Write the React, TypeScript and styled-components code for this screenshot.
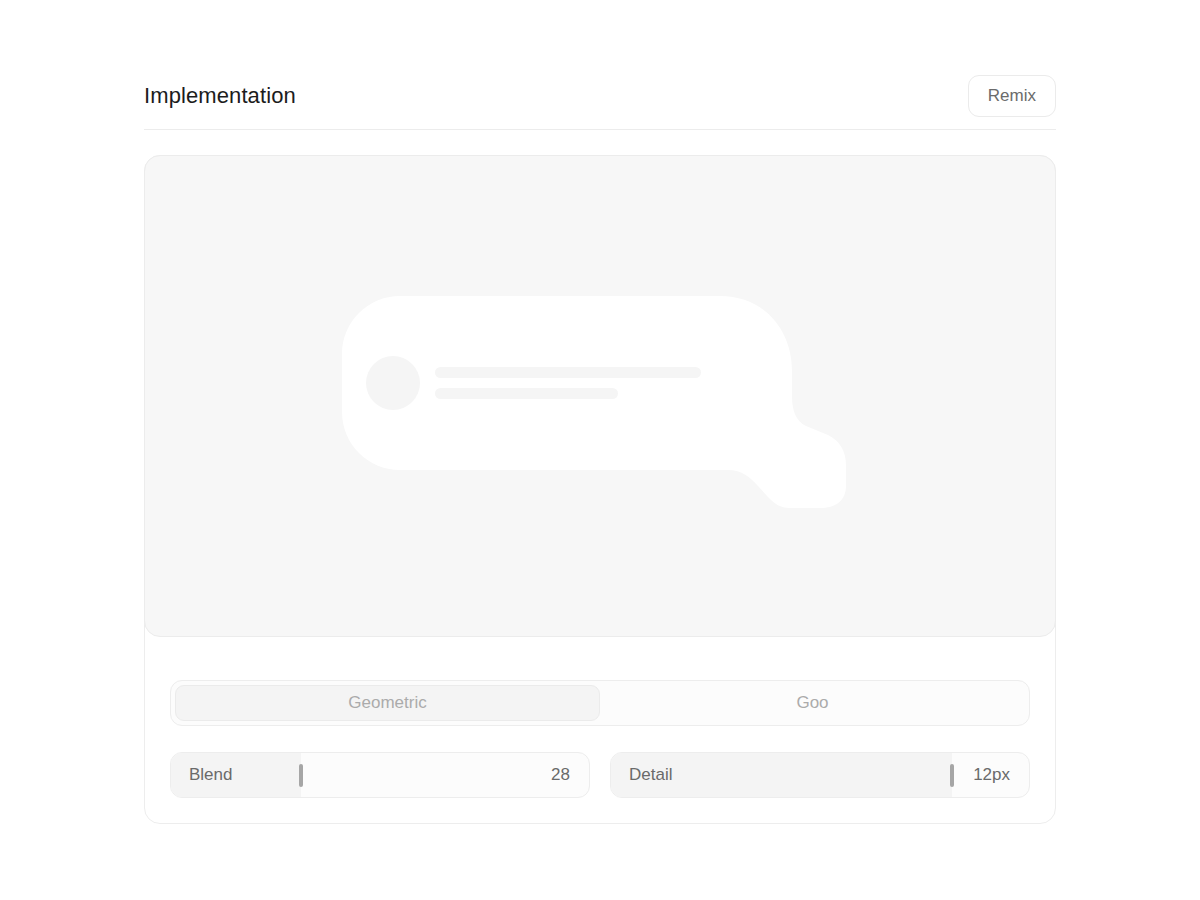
import { createGlobalStyle, styled } from 'styled-components';

const GlobalStyle = createGlobalStyle`
    html, body {
        margin: 0;
        padding: 0;
        background: #ffffff;
        font-family: "Liberation Sans", Arial, sans-serif;
        -webkit-font-smoothing: antialiased;
    }
`;

const Page = styled.div`
    width: 912px;
    margin: 0 auto;
    padding-top: 75px;
`;

const Header = styled.div`
    display: flex;
    align-items: center;
    justify-content: space-between;
    padding-bottom: 12px;
    border-bottom: 1px solid #ececec;
    margin-bottom: 25px;
`;

const Title = styled.h2`
    margin: 0;
    font-size: 22px;
    font-weight: 400;
    color: #1c1c1c;
    letter-spacing: 0.1px;
`;

const RemixButton = styled.button`
    height: 42px;
    padding: 0 19px;
    border: 1px solid #ebebeb;
    border-radius: 11px;
    background: #ffffff;
    font-family: inherit;
    font-size: 17px;
    color: #6b6b6b;
    cursor: pointer;
`;

const Card = styled.div`
    border: 1px solid #ededed;
    border-radius: 16px;
    background: #ffffff;
`;

const Preview = styled.div`
    margin: -1px -1px 0 -1px;
    height: 480px;
    display: flex;
    align-items: center;
    justify-content: center;
    background: #f7f7f7;
    border: 1px solid #ececec;
    border-radius: 16px;
`;

const Controls = styled.div`
    display: flex;
    flex-direction: column;
    gap: 26px;
    padding: 43px 25px 25px;
`;

const Segmented = styled.div`
    display: grid;
    grid-template-columns: 1fr 1fr;
    padding: 4px;
    height: 46px;
    box-sizing: border-box;
    border: 1px solid #ededed;
    border-radius: 12px;
    background: #fcfcfc;
`;

const Segment = styled.button<{ $active?: boolean }>`
    border: 1px solid ${(p) => (p.$active ? '#ebebeb' : 'transparent')};
    border-radius: 9px;
    background: ${(p) => (p.$active ? '#f4f4f4' : 'transparent')};
    font-family: inherit;
    font-size: 17px;
    color: #ababab;
    cursor: pointer;
`;

const SliderRow = styled.div`
    display: grid;
    grid-template-columns: 1fr 1fr;
    gap: 20px;
`;

const Slider = styled.div`
    position: relative;
    height: 46px;
    box-sizing: border-box;
    display: flex;
    align-items: center;
    justify-content: space-between;
    padding: 0 19px 0 18px;
    border: 1px solid #ededed;
    border-radius: 12px;
    background: #fcfcfc;
    overflow: hidden;
    font-size: 17px;
    color: #6a6a6a;
`;

const Fill = styled.div`
    position: absolute;
    left: 0;
    top: 0;
    bottom: 0;
    background: #f4f4f4;
`;

const Thumb = styled.div`
    position: absolute;
    top: 50%;
    width: 4px;
    height: 23px;
    margin-top: -11.5px;
    margin-left: -2px;
    border-radius: 2px;
    background: #a6a6a6;
`;

const SliderText = styled.span`
    position: relative;
`;

const GooShape = () => (
    <svg width="516" height="225" viewBox="342 283 516 225">
        <path
            fill="#ffffff"
            d="M 400 295 L 720 295 C 765 295 792 330 792 370 L 792 395 C 792 410 796 420 806 425 L 828 434 C 840 440 846 450 846 465 L 846 485 C 846 500 835 507 820 507 L 790 507 C 780 507 775 503 768 496 L 758 485 C 750 476 742 469 728 469 L 400 469 C 368 469 342 443 342 411 L 342 353 C 342 321 368 295 400 295 Z"
        />
        <circle cx="393" cy="382" r="27" fill="#f5f5f5" />
        <rect x="435" y="366" width="266" height="11" rx="5.5" fill="#f5f5f5" />
        <rect x="435" y="387" width="183" height="11" rx="5.5" fill="#f5f5f5" />
    </svg>
);

interface RangeProps {
    label: string;
    value: string;
    percent: number;
}

const Range = ({ label, value, percent }: RangeProps) => (
    <Slider>
        <Fill style={{ width: `${percent}%` }} />
        <Thumb style={{ left: `${percent}%` }} />
        <SliderText>{label}</SliderText>
        <SliderText>{value}</SliderText>
    </Slider>
);

export default function App() {
    return (
        <>
            <GlobalStyle />
            <Page>
                <Header>
                    <Title>Implementation</Title>
                    <RemixButton>Remix</RemixButton>
                </Header>
                <Card>
                    <Preview>
                        <GooShape />
                    </Preview>
                    <Controls>
                        <Segmented>
                            <Segment $active>Geometric</Segment>
                            <Segment>Goo</Segment>
                        </Segmented>
                        <SliderRow>
                            <Range label="Blend" value="28" percent={31} />
                            <Range label="Detail" value="12px" percent={81.5} />
                        </SliderRow>
                    </Controls>
                </Card>
            </Page>
        </>
    );
}
